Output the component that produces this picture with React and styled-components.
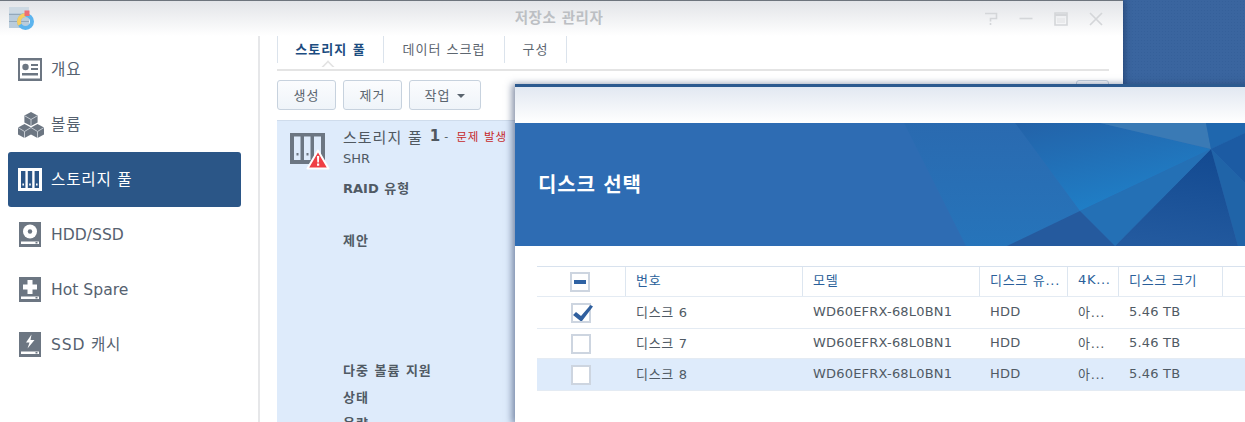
import React from 'react'
import styled, { createGlobalStyle } from 'styled-components'

const GlobalStyle = createGlobalStyle`
  html, body {
    margin: 0;
    padding: 0;
    height: 100%;
    overflow: hidden;
  }
  body {
    font-family: "DejaVu Sans", "Noto Sans CJK KR", sans-serif;
    color: #505a64;
  }
`

const Desktop = styled.div`
  position: relative;
  width: 1245px;
  height: 422px;
  overflow: hidden;
  background-color: #3a659f;
  background-image: radial-gradient(#35609a 1px, transparent 1px);
  background-size: 3px 3px;
`

const Window = styled.div`
  position: absolute;
  left: 0;
  top: 0;
  width: 1123px;
  height: 422px;
  display: flex;
  flex-direction: column;
  background: #fff;
  border-top: 1px solid #6d747d;
  box-sizing: border-box;
  box-shadow: 2px 0 6px rgba(20, 40, 80, 0.45);
`

const TitleBar = styled.div`
  position: relative;
  flex: 0 0 35px;
  display: flex;
  align-items: center;
  padding-left: 9px;
  background: linear-gradient(#e2e4e8, #ffffff);
`

const WindowTitle = styled.div`
  position: absolute;
  left: 0;
  right: 5px;
  top: 8px;
  text-align: center;
  font-size: 14.5px;
  letter-spacing: 0.5px;
  font-weight: 700;
  line-height: 18px;
  color: #bcbfc3;
`

const WindowControls = styled.div`
  margin-left: auto;
  margin-right: 20px;
  display: flex;
  gap: 21px;
  color: #d4d6d9;
`

const WinBody = styled.div`
  flex: 1;
  display: flex;
  min-height: 0;
`

const Sidebar = styled.nav`
  flex: 0 0 260px;
  padding: 6px 17px 0 8px;
  box-sizing: border-box;
  border-right: 2px solid #e6e7e9;
`

const NavItem = styled.div`
  height: 55px;
  display: flex;
  align-items: center;
  padding-left: 10px;
  border-radius: 3px;
  font-size: 15.6px;
  background: ${p => (p.$active ? '#2b5687' : 'transparent')};
  color: ${p => (p.$active ? '#ffffff' : '#566270')};
`

const NavIcon = styled.span`
  flex: 0 0 33px;
  display: flex;
  padding-left: ${p => (p.$drive ? 1 : 0)}px;
  box-sizing: border-box;
`

const NavLabel = styled.span`
  letter-spacing: ${p => (p.$kr ? 0.8 : 0)}px;
  margin-top: ${p => (p.$kr ? -4 : 0)}px;
`

const Main = styled.main`
  flex: 1;
  min-width: 0;
  padding: 0 14px 0 17px;
`

const Tabs = styled.div`
  position: relative;
  height: 33px;
  display: flex;
  border-bottom: 2px solid #e4e4e4;
`

const Tab = styled.div`
  height: 27px;
  width: ${p => p.$w}px;
  box-sizing: border-box;
  padding-bottom: 2px;
  display: flex;
  align-items: center;
  justify-content: center;
  border-left: ${p => (p.$first ? '1px solid #dbe3ec' : 'none')};
  border-right: 1px solid #dbe3ec;
  font-size: 13px;
  letter-spacing: 1px;
  color: ${p => (p.$active ? '#1c4c80' : '#5d6670')};
  font-weight: ${p => (p.$active ? 600 : 400)};
`

const TabNotch = styled.span`
  position: absolute;
  left: 46px;
  bottom: -2px;
  width: 10px;
  height: 10px;
  background: #fff;
  border-left: 2px solid #e4e4e4;
  border-top: 2px solid #e4e4e4;
  transform: translateY(1px) rotate(45deg);
  box-sizing: border-box;
  clip-path: polygon(0 0, 100% 0, 0 100%);
`

const Toolbar = styled.div`
  display: flex;
  gap: 7px;
  margin-top: 9px;
`

const ToolButton = styled.button`
  height: 30px;
  width: ${p => p.$w}px;
  padding: 0 0 2px;
  margin-left: ${p => (p.$push ? 'auto' : '0')};
  box-sizing: border-box;
  display: flex;
  align-items: center;
  justify-content: center;
  gap: 7px;
  border: 1px solid #c7d2de;
  border-radius: 3px;
  background: linear-gradient(#fbfcfe, #eff4f9);
  font: inherit;
  font-size: 13px;
  letter-spacing: 1px;
  color: #5a646e;
`

const Caret = styled.span`
  width: 0;
  height: 0;
  margin-top: 4px;
  border-left: 4px solid transparent;
  border-right: 4px solid transparent;
  border-top: 4px solid #5a646e;
`

const PoolRow = styled.div`
  display: flex;
  gap: 15px;
  margin-top: 10px;
  height: 320px;
  padding: 12px 0 0 13px;
  background: #deebfb;
  border-top: 1px solid #cfdcec;
  box-sizing: border-box;
`

const PoolInfo = styled.div`
  flex: 1;
  min-width: 0;
`

const PoolTitle = styled.div`
  display: flex;
  align-items: center;
  gap: 6px;
  height: 20px;
  margin-top: -7px;
  font-size: 15px;
  letter-spacing: 1px;
  white-space: nowrap;
  color: #505860;

  b {
    font-size: 15px;
    margin-left: 1px;
  }
`

const Dash = styled.span`
  margin-left: -3px;
  font-size: 11px;
`

const Problem = styled.span`
  margin-left: 1px;
  font-size: 11.5px;
  letter-spacing: 1px;
  color: #c62a2a;
`

const PoolLine = styled.div`
  margin-top: ${p => p.$top}px;
  font-size: 13px;
  line-height: 16px;
  height: 16px;
  letter-spacing: ${p => (p.$bold ? 1 : 0)}px;
  font-weight: ${p => (p.$bold ? 600 : 400)};
  color: #505a64;

  b {
    font-weight: 700;
    letter-spacing: 0;
  }
`

const Modal = styled.section`
  position: absolute;
  left: 515px;
  top: 84px;
  width: 740px;
  height: 340px;
  background: #fff;
  border-top: 3px solid #2c5a8f;
  box-sizing: border-box;
  box-shadow: -3px 0 7px rgba(40, 60, 100, 0.55);
`

const ModalHead = styled.div`
  height: 36px;
  background: linear-gradient(#e2e8f1, #ffffff);
`

const Banner = styled.header`
  position: relative;
  height: 123px;
  display: flex;
  align-items: center;
  padding-left: 23px;
  background: #2e6cb3;
  overflow: hidden;
`

const BannerArt = styled.svg`
  position: absolute;
  left: 0;
  top: 0;
  width: 730px;
  height: 123px;
`

const BannerTitle = styled.h1`
  position: relative;
  margin: 0 0 2px;
  font-size: 20px;
  letter-spacing: 0.8px;
  font-weight: 700;
  color: #fff;
`

const Table = styled.div`
  margin: 20px 0 0 22px;
`

const Row = styled.div`
  display: grid;
  grid-template-columns: 88px 177px 177px 88px 51px 105px 1fr;
  height: ${p => p.$h}px;
  box-sizing: border-box;
  border-bottom: 1px solid #e4ebf3;
  border-top: ${p => (p.$head ? '1px solid #d8e2ee' : 'none')};
  background: ${p => (p.$selected ? '#deebfb' : 'transparent')};
  font-size: 13px;
  color: ${p => (p.$head ? '#2a5f9a' : '#505a64')};
`

const Cell = styled.div`
  display: flex;
  align-items: center;
  padding: 0 0 ${p => (p.$head ? 4 : 2)}px 10px;
  white-space: nowrap;
  overflow: hidden;
  letter-spacing: ${p => (p.$kr ? 0.7 : 0.2)}px;
  border-left: 1px solid ${p => (p.$head ? '#dde6f0' : 'transparent')};
  border-right: ${p => (p.$end ? '1px solid #dde6f0' : 'none')};
`

const BoxCell = styled.div`
  display: flex;
  align-items: center;
  padding-left: ${p => (p.$head ? 33 : 34)}px;
`

const CheckBox = styled.span`
  position: relative;
  display: block;
  width: 20px;
  height: 20px;
  box-sizing: border-box;
  background: #fff;
  border: 2px solid #cdd5e0;

  svg {
    position: absolute;
    left: 0;
    top: 0;
    overflow: visible;
  }
`

const MinusBar = styled.span`
  display: block;
  width: 12px;
  height: 4px;
  margin: 6px 2px;
  background: #2f62a3;
`

// 창 버튼
const HelpIcon = () => (
  <svg width="14" height="14" viewBox="0 0 14 14" fill="none" stroke="currentColor" strokeWidth="1.6">
    <path d="M1 1.5h11.5v5H6.500v3" />
    <path d="M5.700 11h1.600v2H5.700z" fill="currentColor" stroke="none" />
  </svg>
)
const MinIcon = () => (
  <svg width="14" height="14" viewBox="0 0 14 14" fill="none" stroke="currentColor" strokeWidth="1.6">
    <path d="M0.5 6.5h13" />
  </svg>
)
const MaxIcon = () => (
  <svg width="14" height="14" viewBox="0 0 14 14" fill="none" stroke="currentColor">
    <path d="M1 1h12v12H1z" strokeWidth="1.6" />
    <path d="M1 3h12" strokeWidth="2" />
    <path d="M3 6h8v5H3z" fill="#e9eaec" stroke="none" />
  </svg>
)
const CloseIcon = () => (
  <svg width="14" height="14" viewBox="0 0 14 14" fill="none" stroke="currentColor" strokeWidth="1.7">
    <path d="M1 1l12 12M13 1L1 13" />
  </svg>
)

const AppIcon = () => (
  <svg width="26" height="26" viewBox="0 0 26 26">
    <path d="M0 1h20v21H0z" fill="#b9ccdc" />
    <path d="M0 1h20v6H0z" fill="#cdd9e3" />
    <path d="M0 8h20v1H0zM0 15h20v1H0z" fill="#93a8ba" />
    <circle cx="16.500" cy="15.500" r="6.500" fill="none" stroke="#5cb4ee" strokeWidth="4" />
    <path d="M16.500 7a8.500 8.500 0 0 0-7.400 12.700l3.500-2a4.500 4.500 0 0 1 3.900-6.700z" fill="#f6cd62" />
    <path d="M15.500 4.500h5v5.500h-5z" fill="#ee6d73" />
  </svg>
)

const OverviewIcon = () => (
  <svg width="24" height="23" viewBox="0 0 24 23">
    <path d="M0 0h24v23H0z" fill="#6c7682" />
    <path d="M2 2.500h20v18H2z" fill="#fff" />
    <circle cx="7.500" cy="9" r="3.200" fill="#6c7682" />
    <path d="M13 6h7v2h-7zM13 10h7v2h-7zM4 15h16v2.500H4z" fill="#6c7682" />
  </svg>
)

const CubesIcon = () => (
  <svg width="26" height="26" viewBox="0 0 26 26">
    <path d="M13 0l6.600 3.600v7L13 14l-6.600-3.400v-7z" fill="#6c7682" />
    <path d="M6.500 12L13 15.400V22.500L6.500 26 0 22.500v-7z" fill="#6c7682" />
    <path d="M19.500 12l6.500 3.500v7L19.500 26 13 22.500v-7z" fill="#6c7682" />
    <path d="M13 7.500l6.600-3.900M13 7.500L6.400 3.600M13 7.500V14M6.500 19.500L0 15.500M6.500 19.500l6.500-4M6.500 19.500V26M19.500 19.500L13 15.500M19.500 19.500l6.500-4M19.500 19.500V26" stroke="#c4cad1" strokeWidth="1" fill="none" />
  </svg>
)

const PoolIcon = ({ frame = '#6c7682', slot = '#fff', dot = '#fff' }) => (
  <svg width="24" height="23" viewBox="0 0 24 23">
    <path d="M0 0h24v23H0z" fill={frame} />
    <path d="M3 3h4.400v17H3zM9.800 3h4.400v17H9.800zM16.600 3H21v17h-4.400z" fill={slot} />
    <path d="M4.400 15.500h1.600v2H4.400zM11.200 15.500h1.600v2h-1.600zM18 15.500h1.600v2H18z" fill={dot} />
  </svg>
)

const DriveBase = ({ children }) => (
  <svg width="22" height="25" viewBox="0 0 22 25">
    <path d="M0 0h22v25H0z" fill="#6c7682" />
    {children}
    <path d="M2 19.500h18v2.500H2z" fill="#fff" />
    <path d="M16.500 20h2v1.500h-2z" fill="#6c7682" />
  </svg>
)
const HddIcon = () => (
  <DriveBase>
    <circle cx="11" cy="9.500" r="7" fill="#fff" />
    <circle cx="11" cy="9.500" r="2.200" fill="#6c7682" />
  </DriveBase>
)
const SpareIcon = () => (
  <DriveBase>
    <path d="M8.500 3h5v4.500H18v5h-4.500v4.500h-5V12.500H4v-5h4.500z" fill="#fff" />
  </DriveBase>
)
const CacheIcon = () => (
  <DriveBase>
    <path d="M12.500 2.500L7 10.500h3.500L8.500 16.500 15.500 8H11.500z" fill="#fff" />
  </DriveBase>
)

const PoolWarnIcon = () => (
  <svg width="38" height="36" viewBox="0 0 38 36" style={{ flex: 'none', overflow: 'visible' }}>
    <path d="M0 0h35v31H0z" fill="#6c7682" />
    <path d="M4 3.500h6.500V27H4zM14 3.500h6.500V27H14zM24 3.500h7V27h-7z" fill="#deebfb" />
    <path d="M6.500 20h2v2.500h-2zM16.500 20h2v2.500h-2z" fill="#6c7682" />
    <path d="M28 17.500l10.500 18H17.500z" fill="#ef3f45" stroke="#fff" strokeWidth="2" strokeLinejoin="round" />
    <path d="M27 23h2.200l-.3 6.500h-1.600zM27 30.500h2.200v2.200H27z" fill="#fff" />
  </svg>
)

const navItems = [
  { label: '개요', kr: true, icon: <OverviewIcon /> },
  { label: '볼륨', kr: true, icon: <CubesIcon /> },
  {
    label: '스토리지 풀',
    kr: true,
    active: true,
    icon: <PoolIcon frame="#ffffff" slot="#2b5687" dot="#ffffff" />,
  },
  { label: 'HDD/SSD', drive: true, icon: <HddIcon /> },
  { label: 'Hot Spare', drive: true, icon: <SpareIcon /> },
  { label: 'SSD 캐시', kr: true, drive: true, icon: <CacheIcon /> },
]

const disks = [
  { name: '디스크 6', h: 32, checked: true },
  { name: '디스크 7', h: 30 },
  { name: '디스크 8', h: 32, selected: true },
]

export default function App() {
  return (
    <Desktop>
      <GlobalStyle />
      <Window>
        <TitleBar>
          <AppIcon />
          <WindowTitle>저장소 관리자</WindowTitle>
          <WindowControls>
            <HelpIcon />
            <MinIcon />
            <MaxIcon />
            <CloseIcon />
          </WindowControls>
        </TitleBar>
        <WinBody>
          <Sidebar>
            {navItems.map(item => (
              <NavItem key={item.label} $active={item.active}>
                <NavIcon $drive={item.drive}>{item.icon}</NavIcon>
                <NavLabel $kr={item.kr}>{item.label}</NavLabel>
              </NavItem>
            ))}
          </Sidebar>
          <Main>
            <Tabs>
              <Tab $first $active $w={107}>스토리지 풀</Tab>
              <Tab $w={121}>데이터 스크럽</Tab>
              <Tab $w={62}>구성</Tab>
              <TabNotch />
            </Tabs>
            <Toolbar>
              <ToolButton $w={59}>생성</ToolButton>
              <ToolButton $w={59}>제거</ToolButton>
              <ToolButton $w={72}>작업<Caret /></ToolButton>
              <ToolButton $w={33} $push />
            </Toolbar>
            <PoolRow>
              <PoolWarnIcon />
              <PoolInfo>
                <PoolTitle>
                  스토리지 풀 <b>1</b> <Dash>-</Dash> <Problem>문제 발생</Problem>
                </PoolTitle>
                <PoolLine $top={5}>SHR</PoolLine>
                <PoolLine $top={14} $bold><b>RAID</b> 유형</PoolLine>
                <PoolLine $top={36} $bold>제안</PoolLine>
                <PoolLine $top={114} $bold>다중 볼륨 지원</PoolLine>
                <PoolLine $top={11} $bold>상태</PoolLine>
                <PoolLine $top={10} $bold>용량</PoolLine>
              </PoolInfo>
            </PoolRow>
          </Main>
        </WinBody>
      </Window>
      <Modal>
        <ModalHead />
        <Banner>
          <BannerArt viewBox="0 0 730 123">
            <defs>
              <linearGradient id="glow" x1="0" y1="0" x2="0.5" y2="1">
                <stop offset="0" stopColor="#2362a8" />
                <stop offset="1" stopColor="#1f80c8" />
              </linearGradient>
              <linearGradient id="fan" x1="0" y1="0" x2="0" y2="1">
                <stop offset="0" stopColor="#2a6ab0" />
                <stop offset="1" stopColor="#2674ba" />
              </linearGradient>
              <linearGradient id="deep" x1="0.6" y1="0" x2="0.4" y2="1">
                <stop offset="0" stopColor="#134a91" />
                <stop offset="1" stopColor="#235a9f" />
              </linearGradient>
            </defs>
            <path d="M389 0L451 123H492L565 88 500 0z" fill="url(#fan)" />
            <path d="M500 0H585L696 26 565 88z" fill="url(#glow)" />
            <path d="M585 0H691L696 26z" fill="#3a7ab5" />
            <path d="M691 0H730V10L696 26z" fill="#1f67ae" />
            <path d="M696 26L730 10V60z" fill="#1c5ba3" />
            <path d="M696 26L730 60V123H723z" fill="#2064a8" />
            <path d="M696 26L723 123H600z" fill="url(#deep)" />
            <path d="M696 26L600 123 565 88z" fill="#2470b5" />
            <path d="M565 88L600 123H492z" fill="#255a9e" />
          </BannerArt>
          <BannerTitle>디스크 선택</BannerTitle>
        </Banner>
        <Table>
          <Row $head $h={31}>
            <BoxCell $head><CheckBox><MinusBar /></CheckBox></BoxCell>
            <Cell $head $kr>번호</Cell>
            <Cell $head $kr>모델</Cell>
            <Cell $head $kr>디스크 유...</Cell>
            <Cell $head $kr>4K...</Cell>
            <Cell $head $kr $end>디스크 크기</Cell>
            <div />
          </Row>
          {disks.map(d => (
            <Row key={d.name} $h={d.h} $selected={d.selected}>
              <BoxCell>
                <CheckBox>
                  {d.checked && (
                    <svg width="20" height="17" viewBox="0 0 20 17">
                      <path d="M0 10L3 7l5 4L17.500 0 20 1.500 9 16H7.500z" fill="#2f5f9e" />
                    </svg>
                  )}
                </CheckBox>
              </BoxCell>
              <Cell $kr>{d.name}</Cell>
              <Cell>WD60EFRX-68L0BN1</Cell>
              <Cell>HDD</Cell>
              <Cell $kr>아...</Cell>
              <Cell>5.46 TB</Cell>
              <div />
            </Row>
          ))}
        </Table>
      </Modal>
    </Desktop>
  )
}
